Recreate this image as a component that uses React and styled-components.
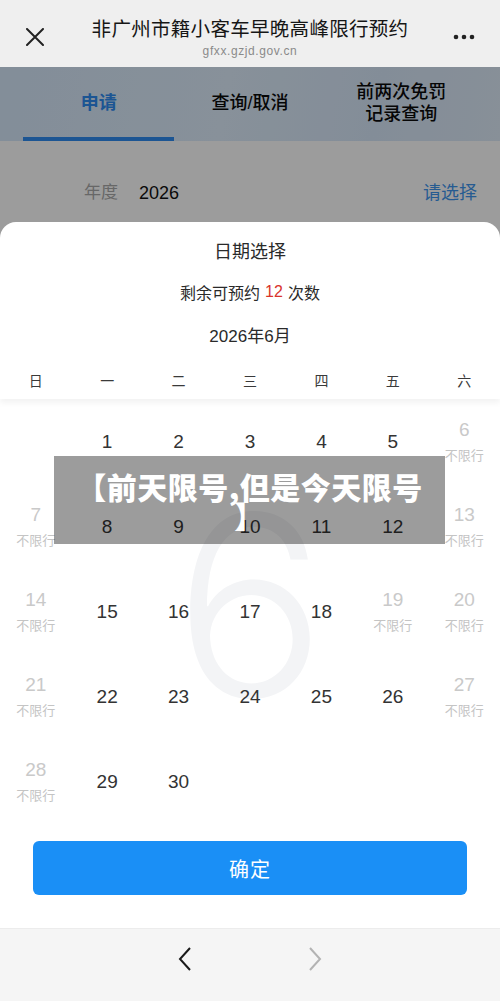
import React from "react";
import styled, { createGlobalStyle } from "styled-components";

const GlobalStyle = createGlobalStyle`
  html, body { margin: 0; padding: 0; background: #fff; }
  body { font-family: "Liberation Sans", "Noto Sans CJK SC", sans-serif; }
  * { box-sizing: border-box; }
`;

const CJK = `"Liberation Sans", "Noto Sans CJK SC", sans-serif`;

const Page = styled.div`
  position: relative;
  width: 500px;
  height: 1001px;
  display: flex;
  flex-direction: column;
  overflow: hidden;
  font-family: ${CJK};
`;

const TopBar = styled.div`
  height: 67px;
  flex: none;
  background: #efefef;
  display: grid;
  grid-template-columns: 70px 1fr 70px;
  align-items: center;
`;

const IconBtn = styled.div`
  display: flex;
  align-items: center;
  justify-content: ${(p) => p.$justify || "center"};
  padding: ${(p) => p.$pad || "0"};
  height: 100%;
  padding-top: 6px;
`;

const TitleBlock = styled.div`
  display: flex;
  flex-direction: column;
  align-items: center;
  padding-top: 8px;
`;

const Title = styled.div`
  font-size: 19.5px;
  line-height: 24px;
  color: #161616;
  white-space: nowrap;
  letter-spacing: 0.3px;
`;

const Url = styled.div`
  font-size: 12px;
  line-height: 16px;
  color: #8a8a8a;
  letter-spacing: 0.6px;
  margin-top: 2px;
`;

const Body = styled.div`
  position: relative;
  flex: 1;
  display: flex;
  flex-direction: column;
  background: #fff;
`;

const Tabs = styled.div`
  height: 74px;
  flex: none;
  padding: 0 23px;
  display: grid;
  grid-template-columns: repeat(3, 1fr);
  background: linear-gradient(100deg, #d6e8fb 0%, #deedfc 45%, #d7e7f9 75%, #deebf9 100%);
`;

const Tab = styled.div`
  display: flex;
  align-items: center;
  justify-content: center;
  text-align: center;
  font-size: 18px;
  line-height: 22px;
  font-weight: ${(p) => (p.$active ? 700 : 500)};
  color: ${(p) => (p.$active ? "#2f8bf0" : "#0a0a0a")};
  border-bottom: 4px solid ${(p) => (p.$active ? "#2f8bf0" : "transparent")};
  padding-top: 2px;
`;

const YearRow = styled.div`
  height: 81px;
  flex: none;
  display: flex;
  align-items: flex-end;
  padding: 0 23px 17px 84px;
  font-size: 17px;
  line-height: 24px;
`;

const YearLabel = styled.span`
  color: #a8a8a8;
`;

const YearValue = styled.span`
  color: #111;
  margin-left: 21px;
  font-size: 18px;
`;

const Pick = styled.span`
  margin-left: auto;
  color: #3f96ee;
  font-size: 18px;
`;

const Mask = styled.div`
  position: absolute;
  inset: 0;
  background: rgba(0, 0, 0, 0.39);
`;

const Sheet = styled.div`
  position: absolute;
  left: 0;
  right: 0;
  bottom: 0;
  height: 706px;
  background: #fff;
  border-radius: 16px 16px 0 0;
  display: flex;
  flex-direction: column;
`;

const HeadLine = styled.div`
  height: ${(p) => p.$h}px;
  flex: none;
  display: flex;
  align-items: center;
  justify-content: center;
  font-size: ${(p) => p.$size}px;
  color: #2a2a2a;
`;

const Red = styled.span`
  color: #d9342b;
  margin: 0 5px;
`;

const WeekRow = styled.div`
  position: relative;
  z-index: 1;
  height: 37px;
  flex: none;
  display: grid;
  grid-template-columns: repeat(7, 1fr);
  align-items: center;
  background: #fff;
  box-shadow: 0 4px 6px rgba(0, 0, 0, 0.05);
  padding-bottom: 1px;
`;

const WeekDay = styled.div`
  text-align: center;
  font-size: 14px;
  color: #3a3a3a;
`;

const Grid = styled.div`
  position: relative;
  height: 425px;
  flex: none;
  display: grid;
  grid-template-columns: repeat(7, 1fr);
  grid-template-rows: repeat(5, 85px);
`;

const Watermark = styled.div`
  position: absolute;
  left: 0;
  right: 0;
  top: 207px;
  transform: translateY(-50%);
  text-align: center;
  font-family: Inter, "Liberation Sans", sans-serif;
  font-weight: 300;
  font-size: 252px;
  line-height: 1;
  color: #f3f4f6;
  pointer-events: none;
`;

const Cell = styled.div`
  position: relative;
  display: flex;
  flex-direction: column;
  align-items: center;
  justify-content: center;
  gap: 6px;
`;

const DayNum = styled.div`
  font-size: 19px;
  line-height: 22px;
  color: ${(p) => (p.$off ? "#c9c9c9" : "#333")};
`;

const DayNote = styled.div`
  font-size: 13px;
  line-height: 18px;
  color: #c4c4c4;
`;

const ButtonWrap = styled.div`
  flex: 1;
  padding: 17px 33px 0;
`;

const Confirm = styled.div`
  height: 54px;
  border-radius: 6px;
  background: #1a8ff6;
  color: #fff;
  font-size: 20px;
  display: flex;
  align-items: center;
  justify-content: center;
  letter-spacing: 1px;
`;

const BottomNav = styled.div`
  height: 73px;
  flex: none;
  background: #f5f5f5;
  border-top: 1px solid #ececec;
  display: flex;
  justify-content: center;
  gap: 70px;
  padding-bottom: 12px;
  align-items: center;
`;

const NavBtn = styled.div`
  width: 60px;
  display: flex;
  justify-content: center;
`;

const Banner = styled.div`
  position: absolute;
  left: 54px;
  top: 456px;
  width: 391px;
  height: 88px;
  padding: 16px 10px 0;
  background: rgba(0, 0, 0, 0.39);
  color: #fff;
  text-align: center;
  font-family: "Noto Sans CJK SC", sans-serif;
  font-weight: 900;
  font-size: 30px;
  line-height: 29px;
  letter-spacing: 0.5px;
`;

const days = [
  [null, 1, 2, 3, 4, 5, { d: 6 }],
  [{ d: 7 }, 8, 9, 10, 11, 12, { d: 13 }],
  [{ d: 14 }, 15, 16, 17, 18, { d: 19 }, { d: 20 }],
  [{ d: 21 }, 22, 23, 24, 25, 26, { d: 27 }],
  [{ d: 28 }, 29, 30, null, null, null, null],
];

export default function App() {
  return (
    <>
      <GlobalStyle />
      <Page>
        <TopBar>
          <IconBtn>
            <svg width="18" height="18" viewBox="0 0 18 18">
              <path d="M1 1 L17 17 M17 1 L1 17" stroke="#222" strokeWidth="2" strokeLinecap="round" />
            </svg>
          </IconBtn>
          <TitleBlock>
            <Title>非广州市籍小客车早晚高峰限行预约</Title>
            <Url>gfxx.gzjd.gov.cn</Url>
          </TitleBlock>
          <IconBtn $justify="flex-end" $pad="0 25px 0 0">
            <svg width="22" height="6" viewBox="0 0 22 6">
              <circle cx="3" cy="3" r="2.3" fill="#222" />
              <circle cx="11" cy="3" r="2.3" fill="#222" />
              <circle cx="19" cy="3" r="2.3" fill="#222" />
            </svg>
          </IconBtn>
        </TopBar>
        <Body>
          <Tabs>
            <Tab $active>申请</Tab>
            <Tab>查询/取消</Tab>
            <Tab>
              前两次免罚
              <br />
              记录查询
            </Tab>
          </Tabs>
          <YearRow>
            <YearLabel>年度</YearLabel>
            <YearValue>2026</YearValue>
            <Pick>请选择</Pick>
          </YearRow>
          <Mask />
          <Sheet>
            <HeadLine $h={56} $size={18}>日期选择</HeadLine>
            <HeadLine $h={28} $size={16}>
              剩余可预约<Red>12</Red>次数
            </HeadLine>
            <HeadLine $h={56} $size={17}>2026年6月</HeadLine>
            <WeekRow>
              {["日", "一", "二", "三", "四", "五", "六"].map((w) => (
                <WeekDay key={w}>{w}</WeekDay>
              ))}
            </WeekRow>
            <Grid>
              <Watermark>6</Watermark>
              {days.flat().map((c, i) =>
                c === null ? (
                  <Cell key={i} />
                ) : typeof c === "number" ? (
                  <Cell key={i}>
                    <DayNum>{c}</DayNum>
                  </Cell>
                ) : (
                  <Cell key={i}>
                    <DayNum $off>{c.d}</DayNum>
                    <DayNote>不限行</DayNote>
                  </Cell>
                )
              )}
            </Grid>
            <ButtonWrap>
              <Confirm>确定</Confirm>
            </ButtonWrap>
          </Sheet>
        </Body>
        <BottomNav>
          <NavBtn>
            <svg width="14" height="24" viewBox="0 0 14 24">
              <path d="M12 1 L2 12 L12 23" fill="none" stroke="#1a1a1a" strokeWidth="2" />
            </svg>
          </NavBtn>
          <NavBtn>
            <svg width="14" height="24" viewBox="0 0 14 24">
              <path d="M2 1 L12 12 L2 23" fill="none" stroke="#b3b3b3" strokeWidth="2" />
            </svg>
          </NavBtn>
        </BottomNav>
        <Banner>
          【前天限号,但是今天限号
          <br />】
        </Banner>
      </Page>
    </>
  );
}
